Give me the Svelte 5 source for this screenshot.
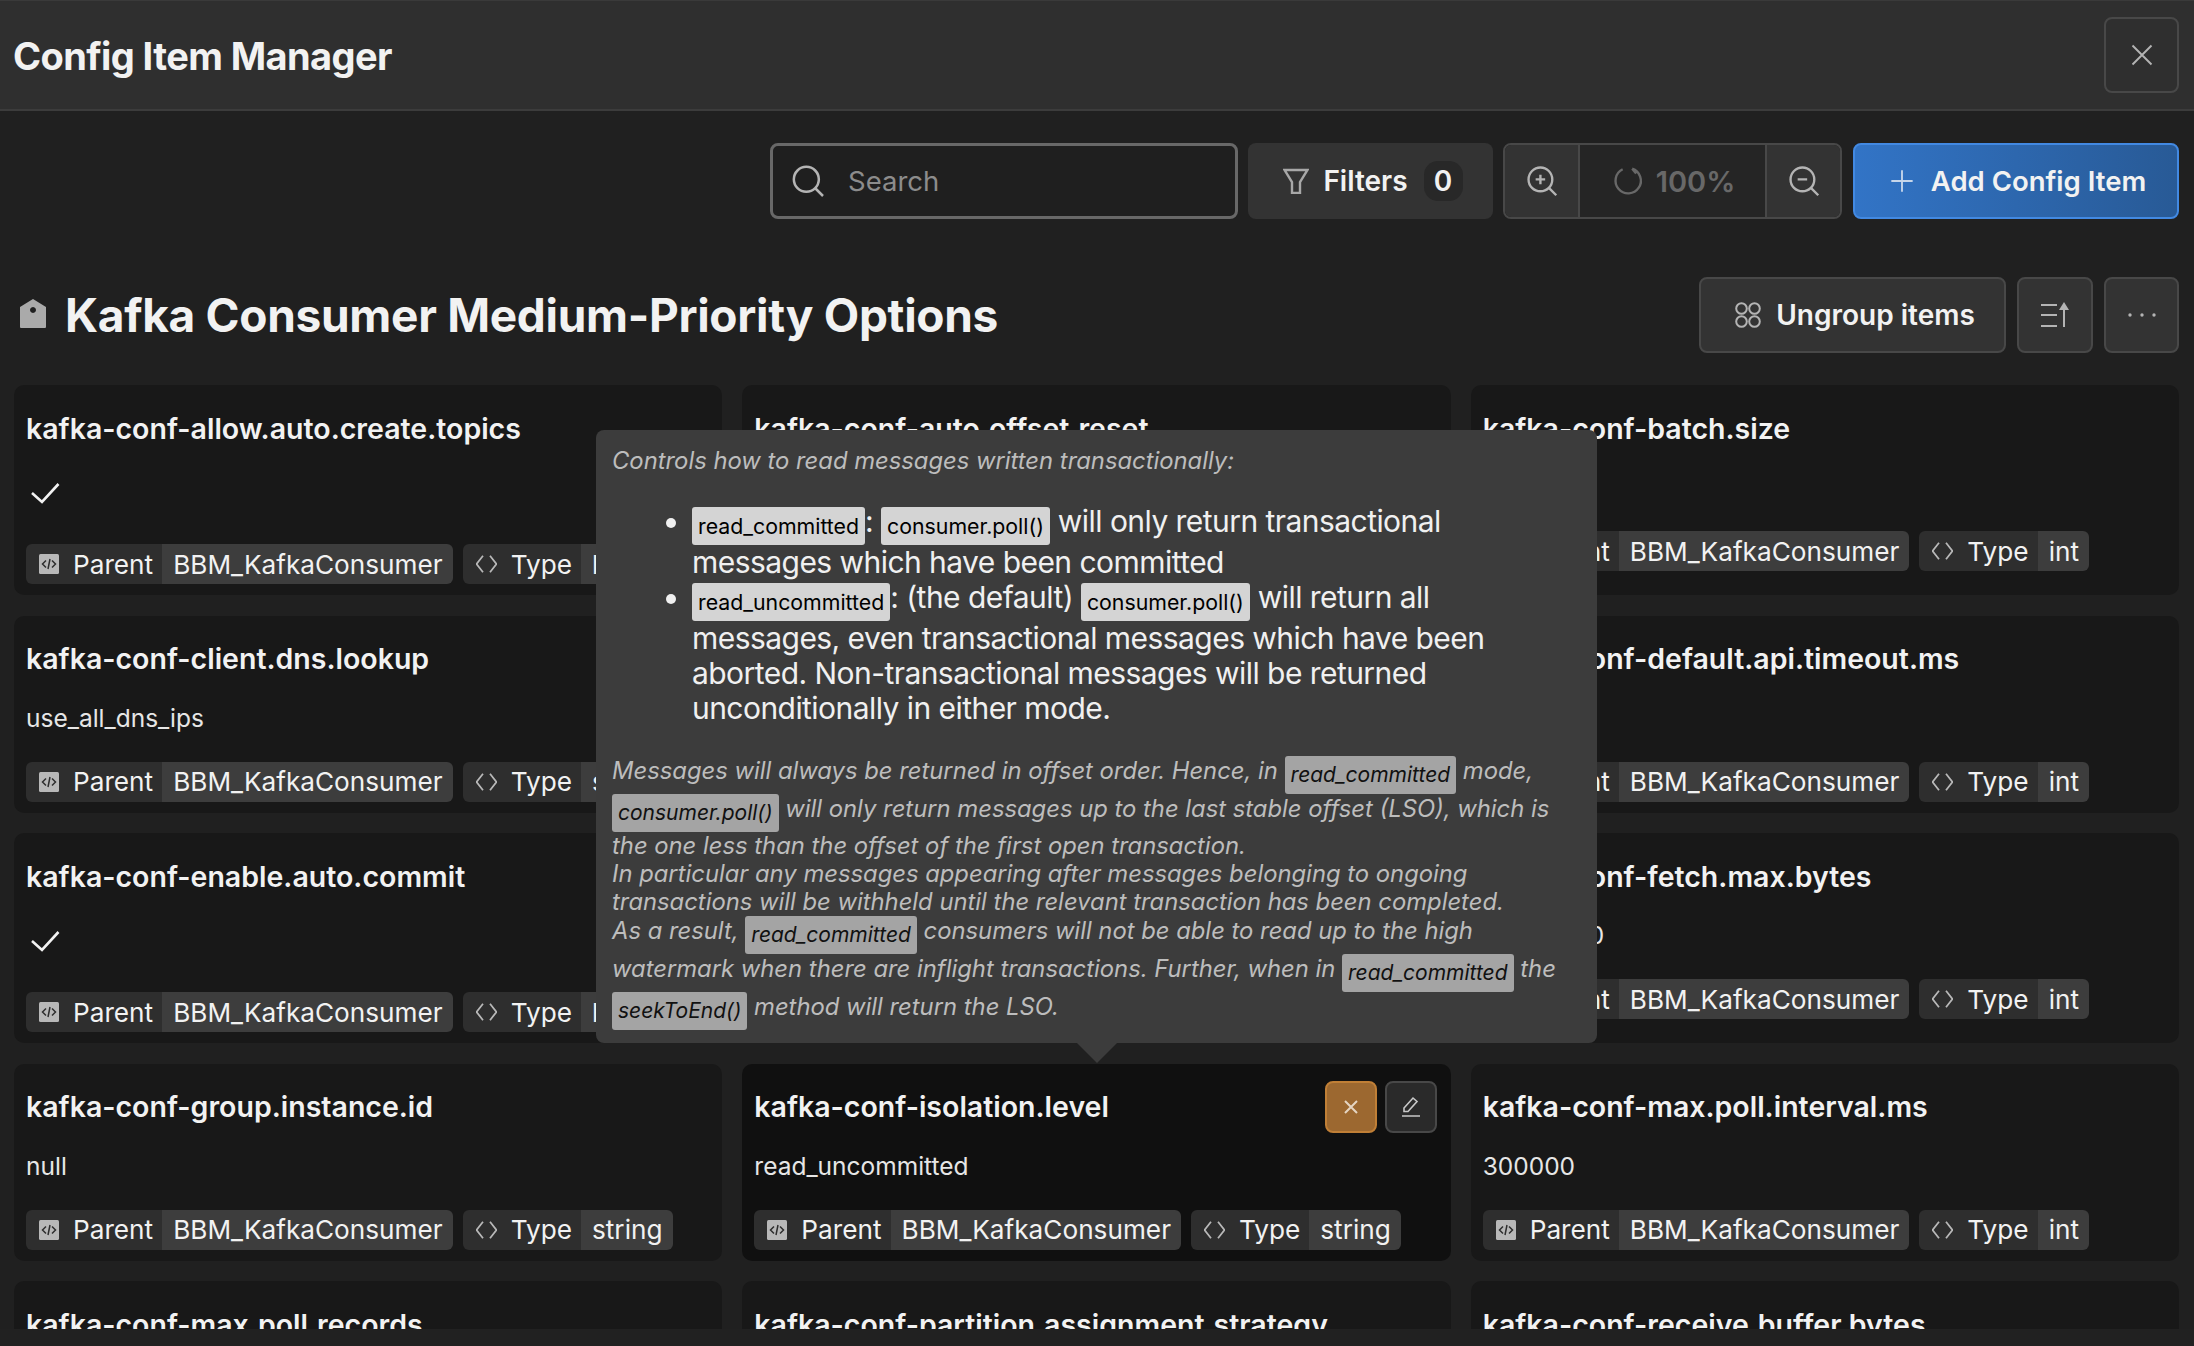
<script>
  const parent = 'BBM_KafkaConsumer';

  // rows of config cards, clipped by the scroll area at the bottom
  const items = [
    { name: 'kafka-conf-allow.auto.create.topics', check: true, type: 'bool' },
    { name: 'kafka-conf-auto.offset.reset', value: 'latest', type: 'string' },
    { name: 'kafka-conf-batch.size', value: '16384', type: 'int' },
    { name: 'kafka-conf-client.dns.lookup', value: 'use_all_dns_ips', type: 'string' },
    { name: 'kafka-conf-connections.max.idle.ms', value: '540000', type: 'int' },
    { name: 'kafka-conf-default.api.timeout.ms', value: '60000', type: 'int' },
    { name: 'kafka-conf-enable.auto.commit', check: true, type: 'bool' },
    { name: 'kafka-conf-exclude.internal.topics', check: true, type: 'bool' },
    { name: 'kafka-conf-fetch.max.bytes', value: '52428800', type: 'int' },
    { name: 'kafka-conf-group.instance.id', value: 'null', type: 'string' },
    { name: 'kafka-conf-isolation.level', value: 'read_uncommitted', type: 'string', hover: true },
    { name: 'kafka-conf-max.poll.interval.ms', value: '300000', type: 'int' },
    { name: 'kafka-conf-max.poll.records', value: '500', type: 'int' },
    { name: 'kafka-conf-partition.assignment.strategy', value: 'range', type: 'string' },
    { name: 'kafka-conf-receive.buffer.bytes', value: '65536', type: 'int' }
  ];
</script>

<div class="page">
  <header class="topbar">
    <h1>Config Item Manager</h1>
    <button class="icon-btn close" aria-label="Close">
      <svg width="38" height="38" viewBox="0 0 24 24" stroke-width="1.2"><path d="M6 6l12 12M18 6L6 18" /></svg>
    </button>
  </header>

  <div class="content">
    <div class="toolbar">
      <div class="search">
        <svg width="40" height="40" viewBox="0 0 24 24"><circle cx="11" cy="11" r="7.5" /><path d="M16.500 16.500L21 21" /></svg>
        <span>Search</span>
      </div>
      <button class="filters">
        <svg width="26" height="26" viewBox="0 0 26 26" stroke-width="2.4"><path d="M1.500 2H24.500L17 14V25H9V14Z" /></svg>
        <span>Filters</span>
        <span class="count">0</span>
      </button>
      <div class="zoom-group">
        <button class="zoom-btn" aria-label="Zoom in">
          <svg width="38" height="38" viewBox="0 0 24 24"><circle cx="11" cy="11" r="7.500" /><path d="M16.500 16.500L21 21M11 8v6M8 11h6" /></svg>
        </button>
        <div class="zoom-val">
          <svg width="38" height="38" viewBox="0 0 24 24"><path d="M14 4.200A8 8 0 1 1 8 4.600M14 4.200l2.500 3" /></svg>
          <span>100%</span>
        </div>
        <button class="zoom-btn" aria-label="Zoom out">
          <svg width="38" height="38" viewBox="0 0 24 24"><circle cx="11" cy="11" r="7.500" /><path d="M16.500 16.500L21 21M8 11h6" /></svg>
        </button>
      </div>
      <button class="add">
        <svg width="32" height="32" viewBox="0 0 24 24" stroke-width="1.400"><path d="M12 4v16M4 12h16" /></svg>
        <span>Add Config Item</span>
      </button>
    </div>

    <div class="section-head">
      <svg class="tag-icon" width="26" height="30" viewBox="0 0 26 30"><path fill-rule="evenodd" d="M13 0L26 8V28Q26 29 25 29H1Q0 29 0 28V8ZM13 8a3 3 0 1 0 .01 0Z" /></svg>
      <h2>Kafka Consumer Medium-Priority Options</h2>
      <div class="section-actions">
        <button class="icon-btn ungroup">
          <svg width="26" height="26" viewBox="0 0 26 26" stroke-width="2"><circle cx="6.500" cy="6.500" r="5.300" /><circle cx="19.500" cy="6.500" r="5.300" /><circle cx="6.500" cy="19.500" r="5.300" /><circle cx="19.500" cy="19.500" r="5.300" /></svg>
          <span>Ungroup items</span>
        </button>
        <button class="icon-btn sort" aria-label="Sort">
          <svg width="30" height="28" viewBox="0 0 30 28" stroke-width="2"><path d="M1 4h16M1 14h16M1 25h16M24 6v20" /><path class="solid" d="M24 1l5 8H19z" /></svg>
        </button>
        <button class="icon-btn" aria-label="More">
          <svg width="28" height="28" viewBox="0 0 28 28"><circle class="solid" cx="2" cy="14" r="1.700" /><circle class="solid" cx="14" cy="14" r="1.700" /><circle class="solid" cx="26" cy="14" r="1.700" /></svg>
        </button>
      </div>
    </div>

    <div class="grid">
      {#each items as item}
        <article class="card" class:hover={item.hover}>
          <div class="card-head">
            <h3>{item.name}</h3>
            {#if item.hover}
              <div class="card-actions">
                <button class="mini orange" aria-label="Reset">
                  <svg width="24" height="24" viewBox="0 0 24 24" stroke-width="2"><path d="M6 6l12 12M18 6L6 18" /></svg>
                </button>
                <button class="mini" aria-label="Edit">
                  <svg width="24" height="24" viewBox="0 0 24 24" stroke-width="1.600"><path d="M5 13L14 3l4 3.500L9 16.500H5zM3 21h18" /></svg>
                </button>
              </div>
            {/if}
          </div>
          <div class="value" class:check={item.check}>
            {#if item.check}
              <svg width="36" height="26" viewBox="0 0 36 26" stroke-width="2.600"><path d="M6 13l10 9L32.500 4" /></svg>
            {:else}
              {item.value}
            {/if}
          </div>
          <div class="tags">
            <span class="tag">
              <span class="tag-key">
                <svg width="20" height="20" viewBox="0 0 20 20"><rect width="20" height="20" rx="1.500" class="solid" /><path class="dark" d="M7 6.500L3.500 10 7 13.500M13 6.500l3.500 3.500-3.500 3.500M11 5l-2 10" /></svg>
                Parent
              </span>
              <span class="tag-val">{parent}</span>
            </span>
            <span class="tag">
              <span class="tag-key">
                <svg width="21" height="28" viewBox="3 0 18 24"><path d="M9 5l-5.500 7L9 19M15 5l5.500 7-5.500 7" /></svg>
                Type
              </span>
              <span class="tag-val">{item.type}</span>
            </span>
          </div>
        </article>
      {/each}
    </div>

    <div class="tooltip">
      <p>Controls how to read messages written transactionally:</p>
      <ul>
        <li><code>read_committed</code>: <code>consumer.poll()</code> will only return transactional messages which have been committed</li>
        <li><code>read_uncommitted</code>: (the default) <code>consumer.poll()</code> will return all messages, even transactional messages which have been aborted. Non-transactional messages will be returned unconditionally in either mode.</li>
      </ul>
      <p class="note">Messages will always be returned in offset order. Hence, in <code>read_committed</code> mode, <code>consumer.poll()</code> will only return messages up to the last stable offset (LSO), which is the one less than the offset of the first open transaction.<br />In particular any messages appearing after messages belonging to ongoing transactions will be withheld until the relevant transaction has been completed.<br />As a result, <code>read_committed</code> consumers will not be able to read up to the high watermark when there are inflight transactions. Further, when in <code>read_committed</code> the <code>seekToEnd()</code> method will return the LSO.</p>
    </div>
  </div>
  <div class="bottom"></div>
</div>

<style>
  :global(body) {
    margin: 0;
    background: #202020;
  }

  .page {
    width: 2194px;
    height: 1346px;
    display: flex;
    flex-direction: column;
    background: #202020;
    font-family: Inter, "Liberation Sans", sans-serif;
    color: #f2f2f2;
    overflow: hidden;
  }

  button {
    font-family: inherit;
    color: inherit;
    cursor: pointer;
  }

  svg {
    fill: none;
    stroke: currentColor;
    stroke-width: 1.5;
    flex-shrink: 0;
  }

  svg[stroke-width] {
    stroke-width: revert-layer;
  }

  svg .solid {
    fill: currentColor;
    stroke: none;
  }

  .topbar {
    flex: 0 0 111px;
    box-sizing: border-box;
    display: flex;
    align-items: center;
    justify-content: space-between;
    padding: 0 15px 0 13px;
    background: #2f2f2f;
    border-top: 1px solid #3a3a3a;
    border-bottom: 2px solid #3c3c3c;
  }

  h1 {
    margin: 2px 0 0;
    font-size: 38px;
    font-weight: 700;
    letter-spacing: -0.6px;
  }

  .icon-btn {
    height: 76px;
    min-width: 75px;
    box-sizing: border-box;
    display: flex;
    align-items: center;
    justify-content: center;
    gap: 15px;
    background: #333;
    border: 2px solid #484848;
    border-radius: 8px;
    color: #b4b4b4;
    padding: 0;
  }

  .close {
    background: #2f2f2f;
  }

  .content {
    position: relative;
    flex: 1;
    min-height: 0;
    overflow: hidden;
    padding: 0 15px 0 14px;
  }

  .toolbar {
    display: flex;
    justify-content: flex-end;
    gap: 10px;
    height: 76px;
    margin-top: 32px;
  }

  .search {
    width: 468px;
    box-sizing: border-box;
    display: flex;
    align-items: center;
    gap: 20px;
    padding-left: 15px;
    background: #1f1f1f;
    border: 3px solid #686868;
    border-radius: 8px;
    color: #b4b4b4;
    font-size: 27.5px;
  }

  .search span {
    color: #8c8c8c;
  }

  .filters {
    width: 245px;
    display: flex;
    align-items: center;
    justify-content: center;
    gap: 14px;
    padding: 0 0 0 5px;
    background: #333;
    border: none;
    border-radius: 8px;
    font-size: 28px;
    font-weight: 600;
  }

  .filters svg {
    color: #a8a8a8;
  }

  .count {
    width: 39px;
    height: 40px;
    display: flex;
    align-items: center;
    justify-content: center;
    background: #282828;
    border-radius: 14px;
    margin-left: 2px;
  }

  .zoom-group {
    display: flex;
    width: 339px;
    margin-right: 1px;
    border: 2px solid #484848;
    border-radius: 8px;
    box-sizing: border-box;
    overflow: hidden;
  }

  .zoom-btn {
    width: 73px;
    background: #333;
    border: none;
    color: #b4b4b4;
    padding: 0;
    display: flex;
    align-items: center;
    justify-content: center;
  }

  .zoom-val {
    flex: 1;
    display: flex;
    align-items: center;
    justify-content: center;
    gap: 8px;
    background: #252525;
    border-left: 2px solid #484848;
    border-right: 2px solid #484848;
    color: #686868;
    font-size: 29px;
    font-weight: 600;
  }

  .add {
    width: 326px;
    display: flex;
    align-items: center;
    justify-content: center;
    gap: 13px;
    background: linear-gradient(90deg, #3274c6, #285a96);
    border: 2px solid #4289e2;
    border-radius: 8px;
    font-size: 27.5px;
    font-weight: 600;
  }

  .add svg {
    color: #c6d6ea;
  }

  .section-head {
    display: flex;
    align-items: center;
    height: 76px;
    margin-top: 58px;
    padding-left: 6px;
    gap: 19px;
  }

  .tag-icon {
    color: #aaa;
    margin-top: -2px;
  }

  .tag-icon path {
    fill: currentColor;
    stroke: none;
  }

  h2 {
    margin: 0;
    font-size: 46px;
    font-weight: 700;
    letter-spacing: -0.3px;
    flex: 1;
  }

  .section-actions {
    display: flex;
    gap: 11px;
  }

  .ungroup {
    width: 307px;
    padding-left: 5px;
  }

  .sort {
    width: 76px;
  }

  .ungroup span {
    color: #f2f2f2;
    font-size: 28px;
    font-weight: 600;
  }

  .grid {
    display: grid;
    grid-template-columns: repeat(3, 1fr);
    column-gap: 20px;
    row-gap: 20.5px;
    align-items: stretch;
    margin-top: 32px;
  }

  .card {
    display: flex;
    flex-direction: column;
    box-sizing: border-box;
    padding: 12px 12px 11px;
    background: #181818;
    border-radius: 10px;
  }

  .card.hover {
    background: #101010;
  }

  .card-head {
    display: flex;
    align-items: center;
    justify-content: space-between;
    min-height: 62px;
    margin-bottom: 2px;
  }

  h3 {
    margin: 0;
    font-size: 28.5px;
    font-weight: 600;
  }

  .card-actions {
    display: flex;
    gap: 8px;
    margin-right: 2px;
  }

  .mini {
    width: 52px;
    height: 52px;
    display: flex;
    align-items: center;
    justify-content: center;
    background: #2a2a2a;
    border: 2px solid #484848;
    border-radius: 8px;
    color: #c8c8c8;
    padding: 0;
  }

  .mini.orange {
    background: #9c6830;
    border-color: #c07f36;
    color: #e5d5c2;
  }

  .value {
    display: flex;
    align-items: center;
    min-height: 36px;
    margin: 8px 0 26px;
    font-size: 24.5px;
    color: #e6e6e6;
  }

  .value.check {
    min-height: 47px;
    margin-bottom: 28px;
    color: #f2f2f2;
  }

  .tags {
    display: flex;
    gap: 10px;
  }

  .tag {
    display: flex;
    height: 40px;
    border-radius: 6px;
    overflow: hidden;
    font-size: 26.2px;
    white-space: nowrap;
  }

  .tag-key {
    display: flex;
    align-items: center;
    gap: 14px;
    padding: 0 9px 0 13px;
    background: #2e2e2e;
  }

  .tag-key svg {
    color: #b8b8b8;
  }

  .tag-key svg .dark {
    stroke: #2e2e2e;
  }

  .tag-val {
    display: flex;
    align-items: center;
    padding: 0 10px 0 11px;
    background: #3d3d3d;
  }

  .tooltip {
    position: absolute;
    left: 596px;
    top: 319px;
    width: 1001px;
    height: 613px;
    box-sizing: border-box;
    padding: 16px 16px;
    background: #3c3c3c;
    border-radius: 8px;
    color: #bdbdbd;
    font-size: 23.8px;
    font-style: italic;
  }

  .tooltip::after {
    content: '';
    position: absolute;
    left: 481px;
    bottom: -20px;
    border: 20px solid transparent;
    border-top-color: #3c3c3c;
    border-bottom: 0;
  }

  .tooltip p {
    margin: 0;
  }

  .tooltip ul {
    margin: 29px 0 30px;
    padding-left: 80px;
    color: #f0f0f0;
    font-size: 30px;
    letter-spacing: -0.55px;
    font-style: normal;
    line-height: 35px;
  }

  .tooltip code {
    display: inline-block;
    font-family: Inter, "Liberation Sans", sans-serif;
    font-size: 21.3px;
    letter-spacing: 0;
    padding: 0 6px;
    line-height: 38px;
    margin-top: 2px;
    vertical-align: -2px;
    border-radius: 3px;
    background: #d4d4d4;
    color: #000;
  }

  .note {
    line-height: 28px;
  }

  .tooltip .note code {
    font-size: 21px;
    margin-top: 0;
    vertical-align: -3px;
    background: #a4a4a4;
    color: #111;
  }

  .bottom {
    flex: 0 0 17px;
    background: #212121;
  }
</style>
